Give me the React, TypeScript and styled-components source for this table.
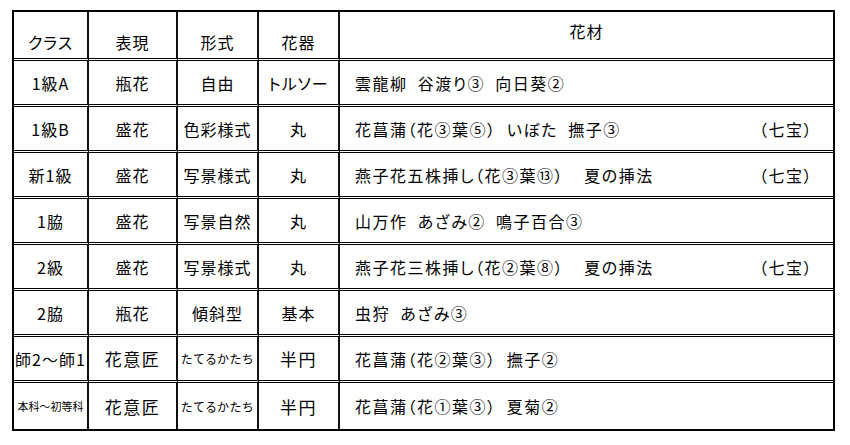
import React from "react"
import styled, { createGlobalStyle } from "styled-components"

type Size = "sm" | "xs" | "md" | "lg"

type Lesson = {
  cls: string
  expr: string
  form: string
  vessel: string
  material: string
  note?: string
  clsSize?: Size
  exprSize?: Size
  formSize?: Size
  vesselSize?: Size
}

const lessons: Lesson[] = [
  { cls: "1級A", expr: "瓶花", form: "自由", vessel: "トルソー", material: "雲龍柳  谷渡り③  向日葵②" },
  { cls: "1級B", expr: "盛花", form: "色彩様式", vessel: "丸", material: "花菖蒲（花③葉⑤）  いぼた  撫子③", note: "（七宝）" },
  { cls: "新1級", expr: "盛花", form: "写景様式", vessel: "丸", material: "燕子花五株挿し（花③葉⑬）    夏の挿法", note: "（七宝）" },
  { cls: "1脇", expr: "盛花", form: "写景自然", vessel: "丸", material: "山万作  あざみ②  鳴子百合③" },
  { cls: "2級", expr: "盛花", form: "写景様式", vessel: "丸", material: "燕子花三株挿し（花②葉⑧）    夏の挿法", note: "（七宝）" },
  { cls: "2脇", expr: "瓶花", form: "傾斜型", vessel: "基本", material: "虫狩  あざみ③" },
  { cls: "師2～師1", expr: "花意匠", form: "たてるかたち", vessel: "半円", material: "花菖蒲（花②葉③）  撫子②", exprSize: "lg", formSize: "sm", vesselSize: "lg" },
  { cls: "本科～初等科", expr: "花意匠", form: "たてるかたち", vessel: "半円", material: "花菖蒲（花①葉③）  夏菊②", clsSize: "xs", exprSize: "lg", formSize: "sm", vesselSize: "lg" },
]

const fontSizes: Record<Size, string> = { xs: "11px", sm: "12px", md: "16px", lg: "17px" }
const spacing: Record<Size, string> = { xs: "0", sm: "1px", md: "1px", lg: "1.5px" }

const GlobalStyle = createGlobalStyle`
  body {
    margin: 0;
    background: #fff;
  }
`

const Page = styled.div`
  padding: 10px 0 0 12px;
  font-family: "Noto Sans CJK JP", "Noto Sans", sans-serif;
  font-feature-settings: "palt";
  color: #000;
`

const Table = styled.table`
  border-collapse: separate;
  border-spacing: 0;
  border: 2px solid #000;
  table-layout: fixed;
  width: 823px;

  th, td {
    box-sizing: border-box;
    padding: 0;
    border-right: 2px solid #111;
    border-bottom: 3px double #000;
    white-space: pre;
    overflow: hidden;
  }

  th:last-child, td:last-child {
    border-right: none;
  }

  tbody tr:last-child td {
    border-bottom: none;
  }
`

const HeadCell = styled.th<{ $w: number; $top?: boolean }>`
  width: ${ p => p.$w }px;
  height: 49px;
  font-weight: normal;
  font-size: 16px;
  letter-spacing: 1px;
  text-align: center;
  vertical-align: ${ p => p.$top ? "top" : "bottom" };
  padding: ${ p => p.$top ? "7px 0 0" : "0 0 4px" } !important;
`

const Cell = styled.td<{ $size?: Size }>`
  height: 46px;
  text-align: center;
  vertical-align: middle;
  font-size: ${ p => fontSizes[p.$size || "md"] };
  letter-spacing: ${ p => spacing[p.$size || "md"] };
`

const MaterialCell = styled.td`
  height: 46px;
  font-size: 16px;
  letter-spacing: 1.5px;
  padding: 0 20px 0 15px !important;
  vertical-align: middle;
`

const MaterialLine = styled.div`
  display: flex;
  justify-content: space-between;
  align-items: center;
`

const App = () => {
  return (
    <Page>
      <GlobalStyle />
      <Table>
        <thead>
          <tr>
            <HeadCell $w={ 75 }>クラス</HeadCell>
            <HeadCell $w={ 89 }>表現</HeadCell>
            <HeadCell $w={ 81 }>形式</HeadCell>
            <HeadCell $w={ 81 }>花器</HeadCell>
            <HeadCell $w={ 493 } $top>花材</HeadCell>
          </tr>
        </thead>
        <tbody>
          { lessons.map((l) => (
            <tr key={ l.cls }>
              <Cell $size={ l.clsSize }>{ l.cls }</Cell>
              <Cell $size={ l.exprSize }>{ l.expr }</Cell>
              <Cell $size={ l.formSize }>{ l.form }</Cell>
              <Cell $size={ l.vesselSize }>{ l.vessel }</Cell>
              <MaterialCell>
                <MaterialLine>
                  <span>{ l.material }</span>
                  { l.note && <span>{ l.note }</span> }
                </MaterialLine>
              </MaterialCell>
            </tr>
          )) }
        </tbody>
      </Table>
    </Page>
  )
}

export default App
